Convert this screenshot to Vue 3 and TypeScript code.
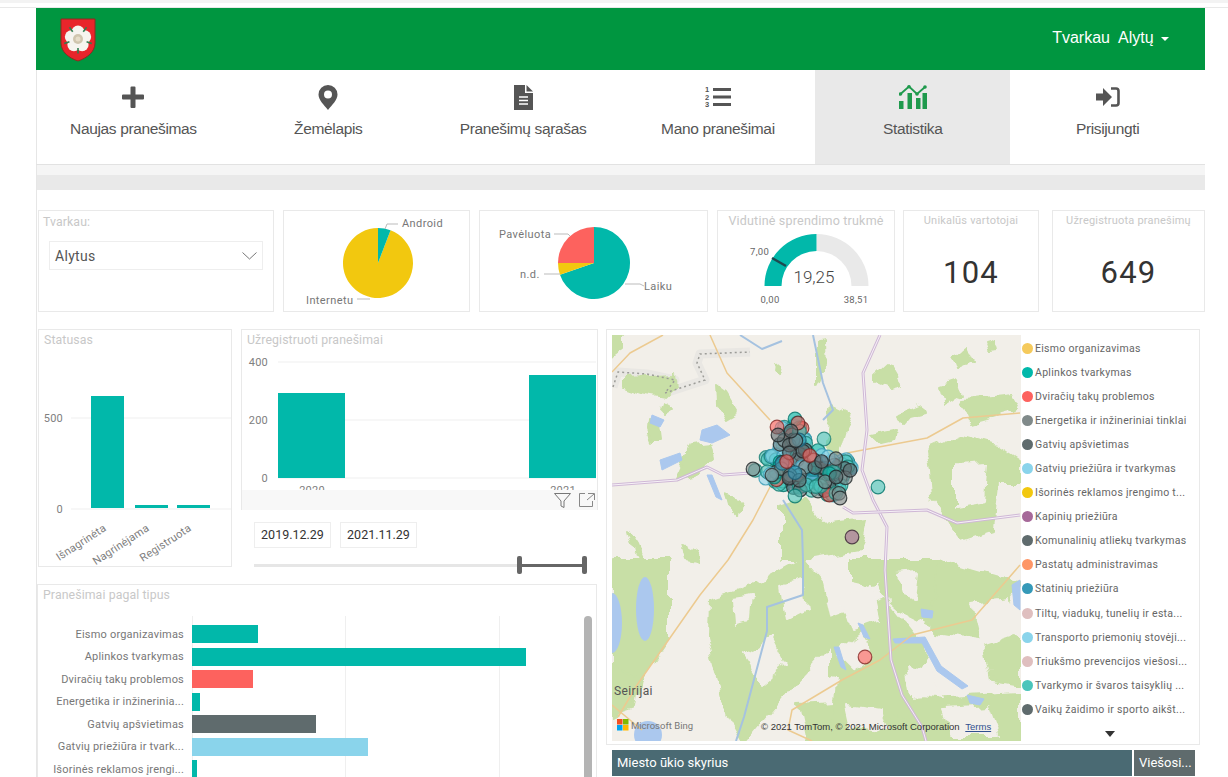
<script setup lang="ts">
interface NavItem {
  key: string
  label: string
  active?: boolean
}

const navItems: NavItem[] = [
  { key: 'plus', label: 'Naujas pranešimas' },
  { key: 'pin', label: 'Žemėlapis' },
  { key: 'doc', label: 'Pranešimų sąrašas' },
  { key: 'list', label: 'Mano pranešimai' },
  { key: 'chart', label: 'Statistika', active: true },
  { key: 'login', label: 'Prisijungti' }
]

const legend = [
  { label: 'Eismo organizavimas', color: '#f5ca5c' },
  { label: 'Aplinkos tvarkymas', color: '#01b8aa' },
  { label: 'Dviračių takų problemos', color: '#fd625e' },
  { label: 'Energetika ir inžineriniai tinklai', color: '#808a8a' },
  { label: 'Gatvių apšvietimas', color: '#5f6b6d' },
  { label: 'Gatvių priežiūra ir tvarkymas', color: '#8ad4eb' },
  { label: 'Išorinės reklamos įrengimo t...', color: '#f2c80f' },
  { label: 'Kapinių priežiūra', color: '#a66999' },
  { label: 'Komunalinių atliekų tvarkymas', color: '#5f6b6d' },
  { label: 'Pastatų administravimas', color: '#fe9666' },
  { label: 'Statinių priežiūra', color: '#3599b8' },
  { label: 'Tiltų, viadukų, tunelių ir esta...', color: '#dfbfbf' },
  { label: 'Transporto priemonių stovėji...', color: '#8ad4eb' },
  { label: 'Triukšmo prevencijos viešosi...', color: '#dfbfbf' },
  { label: 'Tvarkymo ir švaros taisyklių ...', color: '#4ac5bb' },
  { label: 'Vaikų žaidimo ir sporto aikšt...', color: '#5f6b6d' }
]

const typeBars = [
  { label: 'Eismo organizavimas', width: 66, color: '#01b8aa' },
  { label: 'Aplinkos tvarkymas', width: 334, color: '#01b8aa' },
  { label: 'Dviračių takų problemos', width: 61, color: '#fd625e' },
  { label: 'Energetika ir inžinerinia...', width: 8, color: '#01b8aa' },
  { label: 'Gatvių apšvietimas', width: 124, color: '#5f6b6d' },
  { label: 'Gatvių priežiūra ir tvark...', width: 176, color: '#8ad4eb' },
  { label: 'Išorinės reklamos įrengi...', width: 5, color: '#01b8aa' }
]

function polar(cx: number, cy: number, r: number, deg: number) {
  const a = ((deg - 90) * Math.PI) / 180
  return [cx + r * Math.cos(a), cy + r * Math.sin(a)]
}

function slice(cx: number, cy: number, r: number, from: number, to: number) {
  const [x0, y0] = polar(cx, cy, r, from)
  const [x1, y1] = polar(cx, cy, r, to)
  const large = to - from > 180 ? 1 : 0
  return `M${cx} ${cy}L${x0} ${y0}A${r} ${r} 0 ${large} 1 ${x1} ${y1}Z`
}

const sourcePie = [
  { d: slice(94, 52, 35, 21, 360), color: '#f2c80f' },
  { d: slice(94, 52, 35, 0, 21), color: '#01b8aa' }
]

const termPie = [
  { d: slice(114, 52, 36, 0, 251), color: '#01b8aa' },
  { d: slice(114, 52, 36, 251, 270), color: '#f2c80f' },
  { d: slice(114, 52, 36, 270, 360), color: '#fd625e' }
]

const petals = [0, 72, 144, 216, 288].map(deg => polar(18, 21, 7, deg))
const sepals = [36, 108, 180, 252, 324].map(deg => {
  const [x0, y0] = polar(18, 21, 9, deg)
  const [x1, y1] = polar(18, 21, 14.5, deg)
  return `M${x0} ${y0}L${x1} ${y1}`
})

// map shapes, coordinates local to the map box
const greens = [
  '0,0 12,0 12,15 0,24',
  '12,42 62,40 64,50 52,62 30,58 12,52',
  '105,52 116,60 127,78 115,85 106,70',
  '48,68 60,75 52,80 46,74',
  '35,85 48,90 50,105 38,105 34,95',
  '65,143 80,110 100,108 102,118 85,140',
  '112,160 130,165 127,182 115,170',
  '166,25 172,30 170,38 165,32',
  '262,40 275,28 285,45 290,52 278,55 262,48',
  '205,6 212,5 213,35 205,50',
  '220,70 240,80 232,95 222,130 212,120',
  '285,80 310,70 312,78 295,82 290,88',
  '330,50 345,45 350,60 335,70',
  '350,65 400,60 408,75 360,88',
  '375,8 385,5 388,15 378,16',
  '262,100 285,95 283,105 270,108',
  '315,115 350,100 385,110 408,125 408,150 385,150 380,195 350,205 320,165 318,135',
  '170,172 190,165 210,190 252,185 245,215 190,225 170,225',
  '16,195 26,210 32,225 22,218',
  '72,208 84,215 88,225 76,222',
  '0,225 57,225 57,304 22,355 0,340',
  '97,264 155,245 191,225 210,248 222,304 187,343 148,390 132,410 116,382 96,304',
  '218,284 274,264 321,323 274,359 218,343',
  '325,225 408,249 372,304 321,296',
  '187,371 408,359 408,410 195,410',
  '372,304 408,300 408,350 380,345',
  '240,225 280,225 262,250 240,245',
  '260,225 325,225 320,290 290,275 275,262',
  '225,345 300,345 300,380 220,400',
  '340,20 352,10 360,28 345,35',
  '0,330 28,345 24,372 0,380'
]

const clearings = [
  '230,262 260,250 268,285 240,295',
  '295,330 320,335 330,365 300,360',
  '360,270 395,265 400,300 370,310',
  '235,370 270,375 275,395 240,392',
  '130,320 160,300 175,330 150,350',
  '330,375 375,372 385,400 340,400',
  '170,250 190,245 195,275 175,285',
  '345,130 375,128 372,165 345,170',
  '250,300 262,320 240,335 225,320',
  '120,265 140,262 138,285 122,288',
  '285,240 305,238 302,262 290,258'
]

const lakes = [
  '40,80 52,85 48,92 38,88',
  '90,95 105,90 118,100 100,108 88,105',
  '48,125 68,118 70,125 50,135',
  '95,140 100,140 110,165 104,162',
  '246,288 251,290 258,304 252,302',
  '222,312 227,312 234,335 229,332',
  '281,304 313,302 329,331 356,351 350,354 325,336 310,308 283,308',
  '309,274 321,276 320,283 310,282',
  '355,360 372,364 368,370 358,368',
  '400,250 408,245 408,275 402,270'
]

const highways = [
  'M268 0L251 38L255 95L250 135L261 165L275 192L273 235L279 325L290 360L310 392L314 406',
  'M0 150L65 145L95 132L111 140L138 138',
  'M231 172L241 178L315 175L345 188L408 180'
]

const roads = [
  'M98 0L115 38L158 85',
  'M158 152L141 185L116 225L88 260L25 350L6 382',
  'M235 118L315 103L351 83L408 78',
  'M51 0L18 18L0 37',
  'M408 230L360 285L300 300L268 325L230 345L180 375L176 395L200 406',
  'M0 370L30 395'
]

const rivers = [
  'M201 0L211 48L221 75L211 85',
  'M171 165L190 195L191 225L191 260L155 272L155 296L132 382L124 406',
  'M128 0L150 14L170 6'
]

const borderLine = 'M1 52L6 37L35 39L63 45L53 58L93 45L85 28L88 19L138 17'

function makeCluster() {
  const poly = [[170, 92], [186, 86], [200, 110], [240, 127], [238, 145], [226, 163], [188, 155], [158, 147], [140, 133], [163, 115]]
  const inside = (x: number, y: number) => {
    let hit = false
    for (let i = 0, j = poly.length - 1; i < poly.length; j = i++) {
      const [xi, yi] = poly[i]
      const [xj, yj] = poly[j]
      if (yi > y !== yj > y && x < ((xj - xi) * (y - yi)) / (yj - yi) + xi) hit = !hit
    }
    return hit
  }
  const base = [['#8ad4eb', '#3f9fb8'], ['#4ac5bb', '#1f8178'], ['#8ad4eb', '#3f9fb8'], ['#01b8aa', '#07786f']]
  const mixed = [
    ['#5f6b6d', '#22292b'], ['#01b8aa', '#07786f'], ['#5f6b6d', '#22292b'], ['#808a8a', '#2b3233'],
    ['#8ad4eb', '#3f9fb8'], ['#5f6b6d', '#22292b'], ['#3599b8', '#1c5f76'], ['#808a8a', '#22292b'],
    ['#4ac5bb', '#1f8178'], ['#808a8a', '#2b3233'], ['#5f6b6d', '#22292b'], ['#fd625e', '#7a2a28']
  ]
  let seed = 4711
  const rnd = () => {
    seed = (seed * 16807) % 2147483647
    return seed / 2147483647
  }
  const out: { x: number; y: number; fill: string; stroke: string }[] = []
  while (out.length < 210) {
    const x = 138 + rnd() * 105
    const y = 80 + rnd() * 85
    if (!inside(x, y)) continue
    const set = out.length < 130 ? base : mixed
    const [fill, stroke] = set[Math.floor(rnd() * set.length)]
    out.push({ x, y, fill, stroke })
  }
  return out
}

const markers = [
  ...makeCluster(),
  { x: 165, y: 92, fill: '#fd625e', stroke: '#8a2f2c' },
  { x: 183, y: 84, fill: '#01b8aa', stroke: '#07786f' },
  { x: 186, y: 88, fill: '#fd625e', stroke: '#5a2a28' },
  { x: 166, y: 100, fill: '#5f6b6d', stroke: '#22292b' },
  { x: 179, y: 96, fill: '#5f6b6d', stroke: '#22292b' },
  { x: 212, y: 104, fill: '#4ac5bb', stroke: '#1f8178' },
  { x: 141, y: 134, fill: '#808a8a', stroke: '#22292b' },
  { x: 183, y: 161, fill: '#4ac5bb', stroke: '#07786f' },
  { x: 228, y: 163, fill: '#808a8a', stroke: '#22292b' },
  { x: 224, y: 142, fill: '#5f6b6d', stroke: '#22292b' },
  { x: 266, y: 152, fill: '#4ac5bb', stroke: '#07786f' },
  { x: 240, y: 202, fill: '#a66999', stroke: '#3f2a3a' },
  { x: 253, y: 322, fill: '#fd625e', stroke: '#8a2f2c' }
]
</script>

<template>
  <div class="page">
    <div class="top-edge"></div>
    <div class="shell">
      <header class="topbar">
        <svg class="crest" width="36" height="44" viewBox="0 0 36 44">
          <path d="M1 1h34v24c0 9-8 15-17 18C9 40 1 34 1 25z" fill="#e8252b" stroke="#8c2a20" />
          <circle v-for="(p, i) in petals" :key="i" :cx="p[0]" :cy="p[1]" r="6.500" fill="#f6f4ef" />
          <circle cx="18" cy="21" r="11" fill="#f6f4ef" />
          <path v-for="(s, i) in sepals" :key="i" :d="s" stroke="#2f7d4f" stroke-width="1.600" />
          <circle cx="18" cy="21" r="5" fill="#cfc5ae" />
          <circle cx="18" cy="21" r="2.500" fill="#e6ddc8" />
        </svg>
        <div class="user">Tvarkau&nbsp; Alytų <span class="caret"></span></div>
      </header>

      <nav class="nav">
        <div v-for="item in navItems" :key="item.key" class="nav-item" :class="{ active: item.active }">
          <div class="nav-icon">
            <svg v-if="item.key === 'plus'" width="22" height="22" viewBox="0 0 22 22">
              <path d="M8.5 1.5a1 1 0 0 1 1-1h3a1 1 0 0 1 1 1V8.500H21a1 1 0 0 1 1 1v3a1 1 0 0 1-1 1h-7.500V21a1 1 0 0 1-1 1h-3a1 1 0 0 1-1-1v-7.500H1a1 1 0 0 1-1-1v-3a1 1 0 0 1 1-1h7.500z" fill="#555" />
            </svg>
            <svg v-else-if="item.key === 'pin'" width="20" height="25" viewBox="0 0 20 25">
              <path fill-rule="evenodd" d="M10 0a9.500 9.500 0 0 1 9.500 9.500C19.500 15 14 20 10 25 6 20 .5 15 .5 9.500A9.500 9.500 0 0 1 10 0zm0 5.500a4 4 0 1 0 0 8 4 4 0 0 0 0-8z" fill="#555" />
            </svg>
            <svg v-else-if="item.key === 'doc'" width="19" height="25" viewBox="0 0 19 25">
              <path d="M0 0h11v8h8v17H0z" fill="#555" />
              <path d="M12.500 0L19 6.500h-6.500z" fill="#555" />
              <path d="M5 12h9M5 15.500h9M5 19h9" stroke="#fff" stroke-width="1.300" />
            </svg>
            <svg v-else-if="item.key === 'list'" width="26" height="24" viewBox="0 0 26 24">
              <text x="0" y="7" class="num">1</text>
              <text x="0" y="14.500" class="num">2</text>
              <text x="0" y="22" class="num">3</text>
              <path d="M8 4.500h18M8 12h18M8 19.500h18" stroke="#555" stroke-width="3" />
            </svg>
            <svg v-else-if="item.key === 'chart'" width="28" height="24" viewBox="0 0 28 24">
              <path d="M0 16h4.500v8H0zM8.500 8H13v16H8.500zM17 13h4.500v11H17zM23.500 8H28v16h-4.500z" fill="#1f9a4d" />
              <path d="M1.500 9L10 1.500 18 9l8-7" fill="none" stroke="#1f9a4d" stroke-width="1.800" />
              <circle cx="1.500" cy="9" r="1.800" fill="#1f9a4d" /><circle cx="10" cy="1.800" r="1.800" fill="#1f9a4d" />
              <circle cx="18" cy="9" r="1.800" fill="#1f9a4d" /><circle cx="26" cy="2" r="1.800" fill="#1f9a4d" />
            </svg>
            <svg v-else width="24" height="20" viewBox="0 0 24 20">
              <path d="M0 6.500h7V1l9 9-9 9v-5.500H0z" fill="#555" />
              <path d="M15 1.500h5a2.500 2.500 0 0 1 2.500 2.500v12a2.500 2.500 0 0 1-2.500 2.500h-5" fill="none" stroke="#555" stroke-width="2.600" />
            </svg>
          </div>
          <span class="nav-label">{{ item.label }}</span>
        </div>
      </nav>

      <div class="strip"></div>

      <main class="dash">
        <section class="row-top">
          <div class="card slicer">
            <div class="title">Tvarkau:</div>
            <div class="select">
              <span>Alytus</span>
              <svg width="15" height="8" viewBox="0 0 15 8"><path d="M.5.500l7 6.500 7-6.500" fill="none" stroke="#777" /></svg>
            </div>
          </div>

          <div class="card pie-a">
            <svg width="187" height="102" viewBox="0 0 187 102">
              <path v-for="(p, i) in sourcePie" :key="i" :d="p.d" :fill="p.color" />
              <path d="M101 18l2-5h11M73 88h13" class="leader" />
              <text x="118" y="16" class="lbl">Android</text>
              <text x="22" y="93" class="lbl">Internetu</text>
            </svg>
          </div>

          <div class="card pie-b">
            <svg width="229" height="102" viewBox="0 0 229 102">
              <path v-for="(p, i) in termPie" :key="i" :d="p.d" :fill="p.color" />
              <path d="M74 23h14l2 2M64 63h16M145 73h15l4 2" class="leader" />
              <text x="19" y="27" class="lbl">Pavėluota</text>
              <text x="40" y="67" class="lbl">n.d.</text>
              <text x="164" y="79" class="lbl">Laiku</text>
            </svg>
          </div>

          <div class="card gauge">
            <div class="title center">Vidutinė sprendimo trukmė</div>
            <svg width="178" height="102" viewBox="0 0 178 102">
              <path d="M98.500 23a52 52 0 0 1 52 52h-17a35 35 0 0 0-35-35z" fill="#e9e9e9" />
              <path d="M46.500 75a52 52 0 0 1 52-52v17a35 35 0 0 0-35 35z" fill="#01b8aa" />
              <path d="M54 47l14 8" stroke="#1d4a50" stroke-width="2.500" />
              <text x="32" y="44" class="tick">7,00</text>
              <text x="96" y="72" class="gauge-val" text-anchor="middle">19,25</text>
              <text x="52" y="92" class="tick" text-anchor="middle">0,00</text>
              <text x="138" y="92" class="tick" text-anchor="middle">38,51</text>
            </svg>
          </div>

          <div class="card kpi kpi-a">
            <div class="kpi-title">Unikalūs vartotojai</div>
            <div class="kpi-value">104</div>
          </div>

          <div class="card kpi kpi-b">
            <div class="kpi-title">Užregistruota pranešimų</div>
            <div class="kpi-value">649</div>
          </div>
        </section>

        <section class="row-main">
          <div class="left-col">
            <div class="left-top">
              <div class="card status">
                <div class="title">Statusas</div>
                <svg width="194" height="238" viewBox="0 0 194 238">
                  <path d="M32 88h160M32 179h160" class="grid" />
                  <text x="24" y="92" class="axis" text-anchor="end">500</text>
                  <text x="24" y="183" class="axis" text-anchor="end">0</text>
                  <rect x="52" y="66" width="33" height="112" fill="#01b8aa" />
                  <rect x="96" y="175" width="33" height="3" fill="#01b8aa" />
                  <rect x="138" y="175" width="33" height="3" fill="#01b8aa" />
                  <text transform="translate(68 200) rotate(-33)" class="axis" text-anchor="end">Išnagrinėta</text>
                  <text transform="translate(111 200) rotate(-33)" class="axis" text-anchor="end">Nagrinėjama</text>
                  <text transform="translate(153 200) rotate(-33)" class="axis" text-anchor="end">Registruota</text>
                </svg>
              </div>

              <div class="yearly">
                <div class="card yearly-chart">
                  <div class="title">Užregistruoti pranešimai</div>
                  <svg width="357" height="161" viewBox="0 0 357 161">
                    <path d="M36 32h318M36 90h318M36 148h318" class="grid" />
                    <text x="26" y="36" class="axis" text-anchor="end">400</text>
                    <text x="26" y="94" class="axis" text-anchor="end">200</text>
                    <text x="26" y="152" class="axis" text-anchor="end">0</text>
                    <rect x="36" y="63" width="67" height="85" fill="#01b8aa" />
                    <rect x="287" y="45" width="67" height="103" fill="#01b8aa" />
                    <text x="70" y="164" class="axis" text-anchor="middle">2020</text>
                    <text x="321" y="164" class="axis" text-anchor="middle">2021</text>
                  </svg>
                  <div class="visual-foot">
                    <svg width="17" height="15" viewBox="0 0 17 15"><path d="M.5.500h16L10 8v6.500L7 13V8z" fill="none" stroke="#777" /></svg>
                    <svg width="16" height="14" viewBox="0 0 16 14"><path d="M6 .5H.5v13h13V8M9 .5h6.500V7M15 1L8 7" fill="none" stroke="#888" /></svg>
                  </div>
                </div>
                <div class="dates">
                  <span class="date">2019.12.29</span>
                  <span class="date">2021.11.29</span>
                </div>
                <div class="range">
                  <div class="range-fill"></div>
                </div>
              </div>
            </div>

            <div class="card types">
              <div class="title">Pranešimai pagal tipus</div>
              <div class="types-plot">
                <div v-for="row in typeBars" :key="row.label" class="type-row">
                  <span class="type-label">{{ row.label }}</span>
                  <span class="type-bar" :style="{ width: row.width + 'px', background: row.color }"></span>
                </div>
                <div class="scrollbar"></div>
              </div>
            </div>
          </div>

          <div class="right-col">
            <div class="card map-card">
              <div class="map">
                <svg class="map-art" width="409" height="406" viewBox="0 0 409 406">
                  <defs>
                    <filter id="rough" x="-5%" y="-5%" width="110%" height="110%">
                      <feTurbulence type="fractalNoise" baseFrequency="0.045" numOctaves="3" seed="8" />
                      <feDisplacementMap in="SourceGraphic" scale="16" xChannelSelector="R" yChannelSelector="G" />
                    </filter>
                  </defs>
                  <rect width="409" height="406" fill="#f2efe9" />
                  <path :d="borderLine" class="border-band" />
                  <g filter="url(#rough)">
                    <polygon v-for="(g, i) in greens" :key="'g' + i" :points="g" class="green" />
                    <polygon v-for="(c, i) in clearings" :key="'c' + i" :points="c" class="clearing" />
                  </g>
                  <path :d="borderLine" class="border-dots" />
                  <polygon v-for="(l, i) in lakes" :key="'l' + i" :points="l" class="lake" />
                  <ellipse cx="33" cy="274" rx="9" ry="32" fill="#abc8ee" />
                  <ellipse cx="0" cy="288" rx="10" ry="30" fill="#abc8ee" />
                  <ellipse cx="36" cy="400" rx="14" ry="14" fill="#abc8ee" />
                  <path v-for="(r, i) in rivers" :key="'r' + i" :d="r" class="river" />
                  <path v-for="(r, i) in roads" :key="'o' + i" :d="r" class="road" />
                  <template v-for="(h, i) in highways" :key="'h' + i">
                    <path :d="h" class="hw-outer" />
                    <path :d="h" class="hw-inner" />
                  </template>
                  <circle v-for="(m, i) in markers" :key="'m' + i" :cx="m.x" :cy="m.y" r="6.800" :fill="m.fill" :stroke="m.stroke" class="marker" />
                </svg>
                <span class="town">Seirijai</span>
                <div class="bing">
                  <svg width="12" height="12" viewBox="0 0 12 12">
                    <rect width="5.500" height="5.500" fill="#f25022" /><rect x="6" width="5.500" height="5.500" fill="#7fba00" />
                    <rect y="6" width="5.500" height="5.500" fill="#00a4ef" /><rect x="6" y="6" width="5.500" height="5.500" fill="#ffb900" />
                  </svg>
                  <span>Microsoft Bing</span>
                </div>
                <div class="copy">© 2021 TomTom, © 2021 Microsoft Corporation <u>Terms</u></div>
              </div>
              <ul class="legend">
                <li v-for="item in legend" :key="item.label">
                  <i :style="{ background: item.color }"></i>{{ item.label }}
                </li>
                <li class="legend-more"><span class="more-arrow"></span></li>
              </ul>
            </div>
            <div class="table-head">
              <div class="th th-main">Miesto ūkio skyrius</div>
              <div class="th th-side">Viešosi...</div>
            </div>
          </div>
        </section>
      </main>
    </div>
  </div>
</template>

<style>
html, body {
  margin: 0;
  height: 777px;
  overflow: hidden;
  background: #fff;
}
</style>

<style scoped>
.page {
  height: 777px;
  overflow: hidden;
  font-family: "Liberation Sans", Arial, sans-serif;
}
.top-edge {
  height: 8px;
  box-sizing: border-box;
  border-top: 3px solid #f3f3f3;
  border-bottom: 1px solid #e8e8e8;
}
.shell {
  margin-left: 36px;
  width: 1169px;
  border-left: 1px solid #e6e6e6;
  box-sizing: border-box;
}

.topbar {
  height: 62px;
  margin-left: -1px;
  background: #009640;
  display: flex;
  align-items: flex-start;
  justify-content: space-between;
  padding: 10px 36px 0 24px;
  box-sizing: border-box;
}
.crest { display: block; }
.user {
  color: #fff;
  font-size: 16px;
  margin-top: 11px;
}
.caret {
  display: inline-block;
  width: 0;
  height: 0;
  margin-left: 3px;
  vertical-align: middle;
  border-top: 4px solid #fff;
  border-left: 4px solid transparent;
  border-right: 4px solid transparent;
}

.nav {
  display: grid;
  grid-template-columns: repeat(6, 1fr);
  height: 94px;
  margin-left: -1px;
  border-bottom: 1px solid #e2e2e2;
  box-sizing: content-box;
}
.nav-item {
  display: flex;
  flex-direction: column;
  align-items: center;
  color: #555;
  padding-top: 14px;
}
.nav-item.active { background: #e9e9e9; }
.nav-icon {
  height: 26px;
  display: flex;
  align-items: center;
  justify-content: center;
}
.nav-label {
  margin-top: 9px;
  font-size: 15.500px;
  line-height: 20px;
  letter-spacing: -.35px;
}
.num {
  font-size: 7.500px;
  font-weight: 700;
  fill: #555;
  font-family: "Liberation Sans", sans-serif;
}

.strip {
  height: 10px;
  background: #f5f5f5;
  border-bottom: 15px solid #e9e9e9;
}

.dash {
  padding: 20px 0 0 1px;
  font-family: Roboto, "Noto Sans", sans-serif;
}
.card {
  border: 1px solid #e9e9e9;
  box-sizing: border-box;
  background: #fff;
  position: relative;
}
.title {
  color: #c8c8c8;
  font-size: 12.300px;
  line-height: 16px;
  padding: 2px 0 0 5px;
  letter-spacing: .1px;
}
.row-top .slicer .title { padding-top: 3px; padding-left: 4px; }
.title.center { text-align: center; padding: 2px 0 0; font-size: 12.500px; letter-spacing: .2px; white-space: nowrap; }

.row-top {
  display: flex;
  height: 102px;
}
.row-top svg { display: block; }
.slicer { width: 236px; }
.pie-a { width: 187px; margin-left: 9px; }
.pie-b { width: 229px; margin-left: 9px; }
.gauge { width: 178px; margin-left: 9px; }
.gauge .title { position: absolute; left: 0; right: 0; }
.kpi-a { width: 136px; margin-left: 8px; }
.kpi-b { width: 153px; margin-left: 13px; }
.select {
  margin: 11px 10px 0 10px;
  height: 27px;
  border: 1px solid #eee;
  display: flex;
  align-items: center;
  justify-content: space-between;
  padding: 0 5px 0 5px;
  font-size: 14px;
  color: #555;
  letter-spacing: .3px;
}
.lbl {
  font-size: 11px;
  fill: #777;
  letter-spacing: .4px;
}
.leader {
  fill: none;
  stroke: #bbb;
}
.tick {
  font-size: 9.500px;
  fill: #666;
  letter-spacing: .3px;
}
.gauge-val {
  font-size: 17px;
  fill: #444;
  font-weight: 300;
}
.kpi {
  text-align: center;
}
.kpi-title {
  color: #c8c8c8;
  font-size: 11px;
  line-height: 14px;
  padding-top: 3px;
  white-space: nowrap;
  letter-spacing: .2px;
}
.kpi-value {
  margin-top: 26px;
  font-size: 31px;
  line-height: 38px;
  color: #333;
  letter-spacing: 1.200px;
}

.row-main {
  display: flex;
  margin: 17px 0 0 -1px;
}
.left-col { width: 561px; }
.left-top { display: flex; margin-left: 1px; }
.status { width: 194px; height: 238px; margin-right: 9px; }
.status svg { position: absolute; left: 0; top: 0; }
.grid {
  stroke: #efefef;
  fill: none;
}
.axis {
  font-size: 11px;
  fill: #808080;
  letter-spacing: .2px;
}
.yearly { width: 357px; }
.yearly-chart {
  height: 181px;
  border-bottom: 0;
  overflow: hidden;
}
.yearly-chart > svg { position: absolute; left: 0; top: 0; }
.visual-foot {
  position: absolute;
  left: 0;
  right: 0;
  bottom: 0;
  height: 20px;
  background: #f8f8f8;
  display: flex;
  justify-content: flex-end;
  align-items: center;
  gap: 8px;
  padding-right: 2px;
}
.dates {
  display: flex;
  gap: 9px;
  margin: 12px 0 0 13px;
}
.date {
  width: 77px;
  height: 26px;
  border: 1px solid #eee;
  box-sizing: border-box;
  text-align: center;
  line-height: 24px;
  font-size: 12.500px;
  color: #333;
}
.range {
  margin: 16px 0 0 13px;
  width: 331px;
  height: 3px;
  background: #e6e6e6;
  position: relative;
}
.range-fill {
  position: absolute;
  left: 265px;
  right: 0;
  top: -.5px;
  height: 3px;
  background: #666;
}
.range-fill::before,
.range-fill::after {
  content: '';
  position: absolute;
  top: -8px;
  width: 5px;
  height: 18px;
  border-radius: 2px;
  background: #666;
}
.range-fill::before { left: -2px; }
.range-fill::after { right: -2px; }

.types {
  margin-top: 17px;
  width: 560px;
  height: 260px;
}
.types-plot {
  position: relative;
  margin-top: 13px;
  padding-top: 7px;
  background:
    linear-gradient(#efefef, #efefef) 154px 0 / 1px 100% no-repeat,
    linear-gradient(#efefef, #efefef) 307px 0 / 1px 100% no-repeat,
    linear-gradient(#efefef, #efefef) 461px 0 / 1px 100% no-repeat;
  height: 220px;
}
.type-row {
  display: flex;
  align-items: center;
  height: 22.500px;
}
.type-label {
  width: 146px;
  text-align: right;
  margin-right: 8px;
  font-size: 11px;
  color: #777;
  white-space: nowrap;
  letter-spacing: .2px;
}
.type-bar {
  height: 18px;
  display: block;
}
.scrollbar {
  position: absolute;
  left: 546px;
  top: 0;
  bottom: 0;
  width: 8px;
  border-radius: 4px 4px 0 0;
  background: #b4b4b4;
}

.right-col {
  margin-left: 8px;
  width: 594px;
}
.map-card {
  height: 416px;
  width: 594px;
  padding: 5px;
  display: flex;
}
.map {
  width: 409px;
  height: 406px;
  position: relative;
  overflow: hidden;
  flex-shrink: 0;
}
.map-art {
  display: block;
  filter: blur(.4px);
}
.green { fill: #c8dfa6; stroke: #c8dfa6; stroke-width: 2; stroke-linejoin: round; }
.clearing { fill: #f2efe9; stroke: #f2efe9; stroke-width: 2; stroke-linejoin: round; }
.lake { fill: #abc8ee; stroke: #abc8ee; stroke-linejoin: round; }
.river { fill: none; stroke: #a5c2e0; stroke-width: 2; stroke-linejoin: round; }
.road { fill: none; stroke: #ecca90; stroke-width: 1.500; stroke-linejoin: round; }
.hw-outer { fill: none; stroke: #cfb8d6; stroke-width: 3; stroke-linejoin: round; }
.hw-inner { fill: none; stroke: #f7f1f7; stroke-width: 1; stroke-linejoin: round; }
.border-band { fill: none; stroke: #e9e7e3; stroke-width: 9; stroke-linejoin: round; }
.border-dots { fill: none; stroke: #9c9c98; stroke-width: 1.500; stroke-dasharray: 2 3; }
.marker { fill-opacity: .62; stroke-width: 1.200; stroke-opacity: .85; }
.town {
  position: absolute;
  left: 2px;
  top: 349px;
  font-size: 12px;
  color: #555;
  letter-spacing: .4px;
}
.bing {
  position: absolute;
  left: 5px;
  top: 384px;
  display: flex;
  align-items: center;
  gap: 2px;
  font-size: 9.500px;
  color: #777;
}
.copy {
  position: absolute;
  left: 149px;
  top: 386px;
  font-family: "Liberation Sans", sans-serif;
  font-size: 9.500px;
  color: #333;
  white-space: nowrap;
}
.copy u { color: #31508f; margin-left: 3px; }

.legend {
  list-style: none;
  margin: 0 0 0 1px;
  padding: 1px 0 0;
  width: 172px;
}
.legend li {
  height: 24.100px;
  display: flex;
  align-items: center;
  font-size: 10.500px;
  color: #666;
  white-space: nowrap;
  letter-spacing: .3px;
}
.legend i {
  width: 11px;
  height: 11px;
  border-radius: 50%;
  margin-right: 2px;
  flex-shrink: 0;
}
.legend li.legend-more {
  justify-content: center;
  padding-left: 4px;
}
.more-arrow {
  width: 0;
  height: 0;
  border-top: 6px solid #333;
  border-left: 5px solid transparent;
  border-right: 5px solid transparent;
}

.table-head {
  display: flex;
  margin: 5px 0 0 6px;
  gap: 2px;
  color: #fff;
  font-size: 13px;
}
.th {
  height: 26px;
  line-height: 26px;
  white-space: nowrap;
  padding-left: 5px;
  box-sizing: border-box;
}
.th-main { width: 520px; background: #4a6a73; }
.th-side { width: 61px; background: #5f6b6d; }
</style>
